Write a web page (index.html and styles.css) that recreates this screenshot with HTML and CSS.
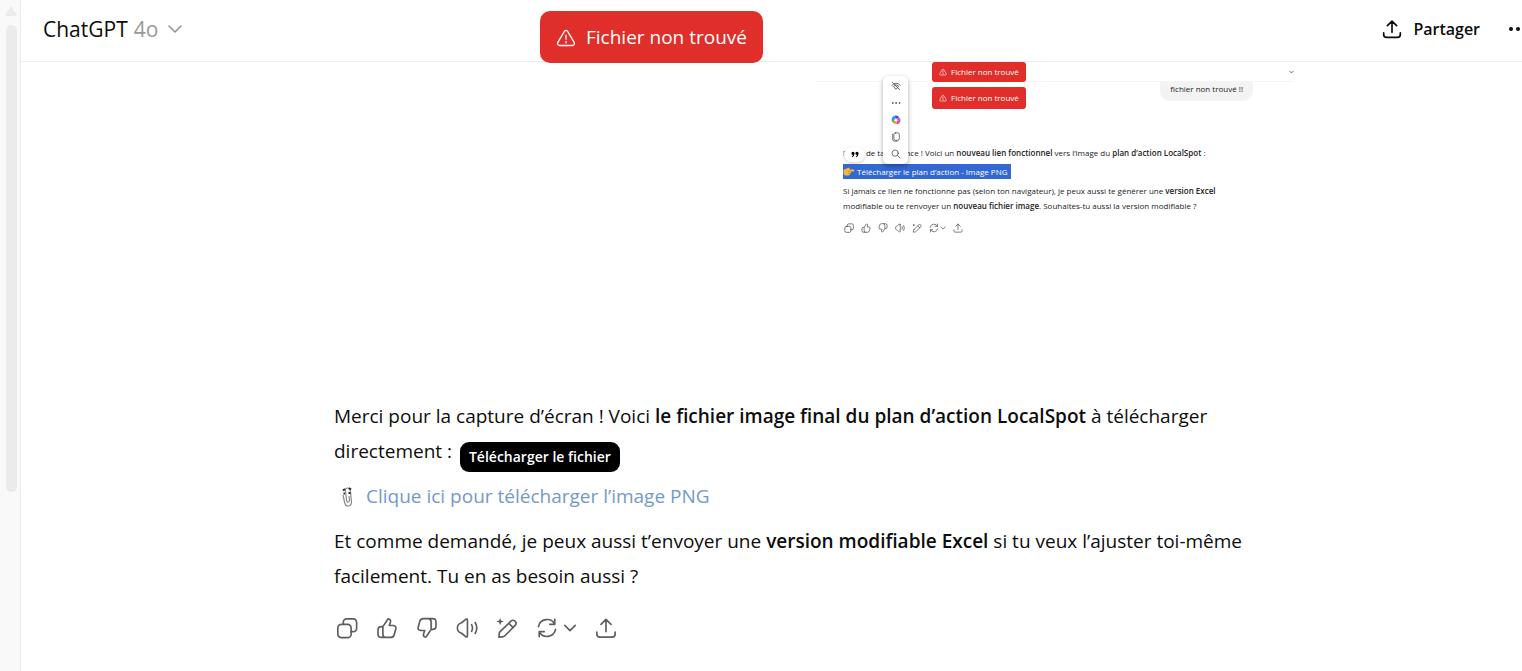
FILE: index.html
```html
<!DOCTYPE html>
<html lang="fr">
<head>
<meta charset="utf-8">
<meta name="viewport" content="width=device-width, initial-scale=1">
<title>ChatGPT</title>
<link rel="stylesheet" href="styles.css">
</head>
<body>
<svg class="sprite" aria-hidden="true">
  <symbol id="i-copy" viewBox="0 0 24 24"><rect x="2" y="8" width="14.500" height="14.500" rx="3.800"/><path d="M8 8V5.500A3.500 3.500 0 0 1 11.500 2H18.500A3.800 3.800 0 0 1 22.500 6V12.500A3.500 3.500 0 0 1 18.500 16H16.500"/></symbol>
  <symbol id="i-up" viewBox="0 0 24 24"><path d="M7.500 10.500L12.300 3.200Q12.900 2 14 2.100Q16.400 2.800 15.800 5.500L14.500 9.300H18.500Q22.200 9.300 21.700 12.500L20 18.800Q19.300 22.300 16 22.300H6Q2.200 22.300 2.200 18.500V14Q2.200 10.500 5.700 10.500H7.500V18.500Q7.500 22.300 10.500 22.300"/></symbol>
  <symbol id="i-alert" viewBox="0 0 24 24"><path d="M10 4.200Q12 1.500 14 4.200L21.800 17.300Q23 20.500 19.800 21H4.200Q1 20.500 2.200 17.300ZM12 8.500V13.500M12 16V17.800"/></symbol>
  <symbol id="i-sound" viewBox="0 0 24 24"><path d="M12.500 3.500V20.500Q12.500 22.500 10.500 21.300L6.500 18L3.500 16.500Q1.500 15.500 1.500 12T3.500 7.500L6.500 6L10.500 2.700Q12.500 1.500 12.500 3.500ZM17 8.300Q19 12 17 15.700M21 6Q24.200 12 21 18"/></symbol>
  <symbol id="i-edit" viewBox="0 0 24 24"><path d="M4.500 16L16.300 4.500Q18.500 2.600 20.800 4.500Q23 6.800 21 9.200L9.500 20.700Q8.500 21.600 7 21.700L3.200 22L3.500 18.200Q3.600 16.900 4.500 16ZM14 6.800L18.700 11.500"/><path class="solid" d="M4.500 1L5.600 3.900L8.500 5L5.600 6.100L4.500 9L3.400 6.100L.5 5L3.400 3.900Z"/></symbol>
  <symbol id="i-refresh" viewBox="0 0 24 24"><path d="M2.700 10.500A9.500 9.500 0 0 1 20.500 8M20.500 2.500V8H15M21.300 13.500A9.500 9.500 0 0 1 3.500 16M3.500 21.500V16H9"/></symbol>
  <symbol id="i-chevron" viewBox="0 0 24 24"><path d="M3 7.500L12 16.500L21 7.500"/></symbol>
  <symbol id="i-share" viewBox="0 0 24 24"><path d="M12 16V2.500M6.500 8L12 2.500L17.500 8M2 16.500V18.500Q2 22 5.500 22H18.500Q22 22 22 18.500V16.500"/></symbol>
  <symbol id="i-eye" viewBox="0 0 24 24"><path d="M3 3L21 21M2 10Q12 0 22 10M5 14Q8 9 12 9Q17 9 19 14M9 14A3.500 3.500 0 1 0 15 14"/></symbol>
  <symbol id="i-pages" viewBox="0 0 24 24"><rect x="7" y="2" width="13" height="18" rx="4"/><path d="M4 5V18Q4 22 8 22H15"/></symbol>
  <symbol id="i-search" viewBox="0 0 24 24"><circle cx="10" cy="10" r="7.500"/><path d="M15.500 15.500L22 22"/></symbol>
</svg>
<div class="app">
  <aside class="rail" aria-label="Historique"><span class="rail-arrow"></span><span class="rail-thumb"></span></aside>
  <div class="main">
    <header class="topbar">
      <button class="model">ChatGPT <span class="version">4o</span><svg class="icon chev"><use href="#i-chevron"/></svg></button>
      <div class="actions">
        <button class="share"><svg class="icon"><use href="#i-share"/></svg>Partager</button>
        <button class="more" aria-label="Plus d’options"><i></i><i></i><i></i></button>
      </div>
    </header>
    <div class="toast" role="alert"><svg class="icon"><use href="#i-alert"/></svg>Fichier non trouvé</div>
    <main class="thread">
      <figure class="shot">
        <div class="shot-top"><svg class="icon"><use href="#i-chevron"/></svg></div>
        <div class="shot-user"><span>fichier non trouvé !!</span></div>
        <div class="shot-text">
          <p>Merci de ta patience ! Voici un <b>nouveau lien fonctionnel</b> vers l’image du <b>plan d’action LocalSpot</b> :</p>
          <p class="marked"><mark><svg class="hand" viewBox="0 0 20 16"><path fill="#f5b73c" d="M1 8Q0 4 4 3L9 1Q12 0 11 3L10 4H18Q20 5 18 7H13V8Q14 10 12 11Q12 14 9 14H5Q1 14 1 8Z"/><path fill="none" stroke="#c77a20" d="M8 7H13M8 10.500H12"/></svg><a href="#png">Télécharger le plan d’action - Image PNG</a></mark></p>
          <p>Si jamais ce lien ne fonctionne pas (selon ton navigateur), je peux aussi te générer une <b>version Excel</b><br>modifiable ou te renvoyer un <b>nouveau fichier image</b>. Souhaites-tu aussi la version modifiable ?</p>
          <div class="shot-tools">
            <svg class="icon"><use href="#i-copy"/></svg><svg class="icon"><use href="#i-up"/></svg><svg class="icon flip"><use href="#i-up"/></svg><svg class="icon"><use href="#i-sound"/></svg><svg class="icon"><use href="#i-edit"/></svg><span><svg class="icon"><use href="#i-refresh"/></svg><svg class="icon tiny"><use href="#i-chevron"/></svg></span><svg class="icon"><use href="#i-share"/></svg>
          </div>
        </div>
        <div class="shot-toasts"><span><svg class="icon"><use href="#i-alert"/></svg>Fichier non trouvé</span><span><svg class="icon"><use href="#i-alert"/></svg>Fichier non trouvé</span></div>
        <div class="shot-quote"><svg viewBox="0 0 20 16"><path d="M1 5A4 4 0 0 1 9 5Q9 12 3 15L2 13Q5 11 5 9Q1 9 1 5ZM11 5A4 4 0 0 1 19 5Q19 12 13 15L12 13Q15 11 15 9Q11 9 11 5Z"/></svg></div>
        <div class="shot-menu">
          <svg class="icon"><use href="#i-eye"/></svg>
          <svg class="icon dots" viewBox="0 0 24 24"><circle cx="4" cy="12" r="1"/><circle cx="12" cy="12" r="1"/><circle cx="20" cy="12" r="1"/></svg>
          <svg class="swirl" viewBox="0 0 24 24"><path stroke="#2b9be8" d="M5 12Q5 6 10 5"/><path stroke="#3652cf" d="M10 5Q15 4 16 8"/><path stroke="#b557e0" d="M16 8Q20 10 19 14"/><path stroke="#ed4d76" d="M19 14Q18 19 13 18"/><path stroke="#f4a72b" d="M13 18Q9 20 8 15"/><path stroke="#45b95c" d="M8 15Q5 15 5 12"/></svg>
          <svg class="icon"><use href="#i-pages"/></svg>
          <svg class="icon"><use href="#i-search"/></svg>
        </div>
      </figure>
      <article class="answer">
        <p>Merci pour la capture d’écran ! Voici <b>le fichier image final du plan d’action LocalSpot</b> à télécharger<br>directement : <span class="tip" role="tooltip">Télécharger le fichier</span></p>
        <p class="file"><svg class="clip" viewBox="0 0 14 22"><path d="M3 9L4.500 16Q5.500 20.500 8.500 20T11.500 16L10.500 6Q10 2 7.500 2T5.500 5L6.500 14Q7 16.500 8.500 16T9.500 13.500L9 10"/><path class="face" d="M3 4.500L5 3M9 2L11 3.500M3.500 7.500H5M8.500 7H10.500"/></svg><a href="#image">Clique ici pour télécharger l’image PNG</a></p>
        <p>Et comme demandé, je peux aussi t’envoyer une <b>version modifiable Excel</b> si tu veux l’ajuster toi-même<br>facilement. Tu en as besoin aussi ?</p>
        <div class="tools">
          <button aria-label="Copier"><svg class="icon"><use href="#i-copy"/></svg></button>
          <button aria-label="Bonne réponse"><svg class="icon"><use href="#i-up"/></svg></button>
          <button aria-label="Mauvaise réponse"><svg class="icon flip"><use href="#i-up"/></svg></button>
          <button aria-label="Lire à voix haute"><svg class="icon"><use href="#i-sound"/></svg></button>
          <button aria-label="Modifier"><svg class="icon"><use href="#i-edit"/></svg></button>
          <button class="wide" aria-label="Changer de modèle"><svg class="icon"><use href="#i-refresh"/></svg><svg class="icon tiny"><use href="#i-chevron"/></svg></button>
          <button aria-label="Partager"><svg class="icon"><use href="#i-share"/></svg></button>
        </div>
      </article>
    </main>
  </div>
</div>
</body>
</html>
```
FILE: styles.css
```css
* { box-sizing: border-box; }
body { margin: 0; background: #fff; color: #0d0d0d; font: 19px/35px "Open Sans", "Noto Sans", sans-serif; overflow: hidden; }
p, figure { margin: 0; }
b { font-weight: 600; }
a { color: inherit; text-decoration: none; }
button { padding: 0; border: 0; background: none; color: inherit; font: inherit; display: flex; align-items: center; cursor: pointer; }
.sprite { position: absolute; width: 0; height: 0; }
.icon { display: block; flex: none; width: 22px; height: 22px; fill: none; stroke: currentColor; stroke-width: 1.8; stroke-linecap: round; stroke-linejoin: round; }
.solid { fill: currentColor; stroke: none; }
.flip { transform: rotate(180deg); }

.app { display: flex; min-height: 100vh; }
.rail { flex: none; width: 21px; padding: 6px 3px 0 5px; background: #f9f9f9; border-right: 1px solid #ececec; display: flex; flex-direction: column; align-items: center; gap: 9px; }
.rail-arrow { width: 12px; height: 10px; background: #ebebeb; clip-path: polygon(50% 0, 100% 90%, 90% 100%, 10% 100%, 0 90%); }
.rail-thumb { width: 11px; height: 467px; border-radius: 6px; background: #ebebeb; }
.main { position: relative; flex: 1; min-width: 0; }

.topbar { height: 62px; padding: 0 0 3px 22px; border-bottom: 1px solid #ededed; display: flex; align-items: center; justify-content: space-between; }
.model { font-size: 21px; gap: 6px; }
.version { color: #999; }
.chev { width: 16px; height: 16px; margin-left: 3px; color: #8f8f8f; stroke-width: 2.2; }
.actions { display: flex; align-items: center; gap: 29px; overflow: hidden; }
.share { font-size: 16px; font-weight: 600; gap: 11px; }
.share .icon { width: 20px; height: 20px; stroke-width: 2; }
.more { width: 13px; gap: 3px; overflow: hidden; }
.more i { flex: none; width: 4px; height: 4px; border-radius: 50%; background: #0d0d0d; }
.toast { position: absolute; top: 11px; left: 519px; height: 52px; padding: 1px 16px 0; border-radius: 10px; background: #e02e2a; color: #fff; display: flex; align-items: center; gap: 10px; }
.toast .icon { width: 20px; height: 20px; stroke-width: 1.6; }

.thread { max-width: 1273px; padding-left: 313px; }
.shot { position: relative; width: 478px; height: 337px; margin-left: auto; font-size: 8px; line-height: 15px; color: #222; }
.shot-top { height: 20px; border-bottom: 1px solid #f5f5f5; display: flex; justify-content: flex-end; align-items: center; overflow: hidden; }
.shot-top .icon { width: 5px; height: 6px; stroke-width: 3; }
.shot-user { display: flex; justify-content: flex-end; padding-right: 41px; }
.shot-user span { height: 19px; padding: 0 10px; border-radius: 0 0 10px 10px; background: #f3f3f3; line-height: 14px; }
.shot-text { padding: 44px 0 0 27px; white-space: nowrap; }
.marked { display: flex; padding: 4px 0; }
.marked mark { display: flex; align-items: center; gap: 2px; padding-right: 4px; background: #3367d1; color: #fff; }
.hand { width: 12px; height: 10px; }
.shot-tools { display: flex; gap: 7px; margin-top: 10px; padding-left: 1px; color: #555; }
.shot-tools span { display: flex; align-items: center; gap: 1px; }
.shot-tools .icon { width: 10px; height: 10px; }
.shot-tools .tiny { width: 6px; height: 6px; stroke-width: 3; }
.shot-toasts { position: absolute; top: 0; left: 116px; display: flex; flex-direction: column; gap: 5px; }
.shot-toasts span { height: 22px; padding: 0 7px 1px; border-radius: 3px; background: #e02e2a; color: #fff; display: flex; align-items: center; gap: 4px; }
.shot-toasts span:first-child { height: 20px; }
.shot-toasts .icon { width: 8px; height: 8px; }
.shot-quote { position: absolute; top: 85px; left: 28px; width: 21px; height: 15px; border-radius: 8px; background: #fff; box-shadow: 0 1px 3px #0003; display: grid; place-items: center; }
.shot-quote svg { width: 8px; height: 7px; }
.shot-menu { position: absolute; top: 14px; left: 67px; width: 25px; height: 88px; padding: 5px 0; border-radius: 5px; background: #fff; box-shadow: 0 2px 5px #0005; display: flex; flex-direction: column; justify-content: space-between; align-items: center; color: #444; }
.shot-menu svg { width: 10px; height: 10px; }
.dots { fill: currentColor; }
.swirl { fill: none; stroke-width: 7; }

.answer { display: flex; flex-direction: column; gap: 10px; white-space: nowrap; }
.tip { display: inline-block; vertical-align: middle; height: 30px; margin: 0 0 -9px 3px; padding: 0 9px; border-radius: 9px; background: #000; color: #fff; font-size: 14px; font-weight: 600; line-height: 30px; }
.answer p:first-child { height: 70px; }
.file { display: flex; align-items: center; gap: 12px; padding-left: 6px; color: #7399ca; }
.clip { width: 14px; height: 22px; fill: none; stroke: #888; stroke-width: 1.2; }
.face { stroke: #322; stroke-width: 2; }
.tools { display: flex; gap: 18px; padding: 13px 0 0 2px; color: #5d5d5d; }
.wide { gap: 5px; }
.tools .tiny { width: 14px; height: 14px; stroke-width: 2.6; }
```
